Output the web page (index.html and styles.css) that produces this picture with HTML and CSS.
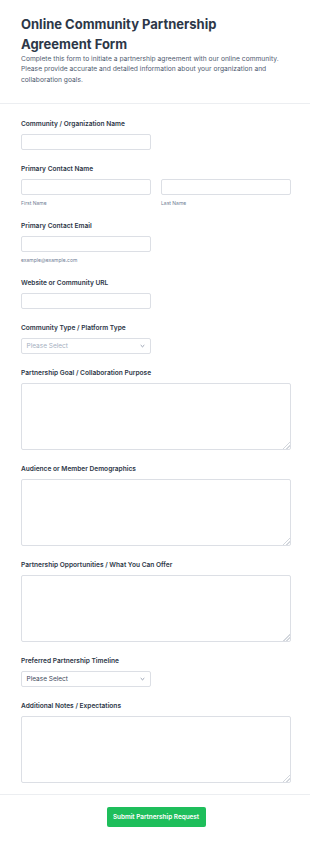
FILE: index.html
```html
<!DOCTYPE html>
<html lang="en">
<head>
  <meta charset="UTF-8" />
  <meta name="viewport" content="width=device-width, initial-scale=1.0"/>
  <title>Online Community Partnership Agreement Form</title>
  <link rel="stylesheet" href="styles.css">
</head>
<body>
  <header class="form-header">
    <h1>Online Community Partnership Agreement Form</h1>
    <p>Complete this form to initiate a partnership agreement with our online community. Please provide accurate and detailed information about your organization and collaboration goals.</p>
  </header>

  <form>
    <div class="fields">
      <div class="field">
        <label for="org">Community / Organization Name</label>
        <input id="org" class="input half" type="text">
      </div>

      <div class="field">
        <label>Primary Contact Name</label>
        <div class="name-row">
          <div>
            <input class="input" type="text">
            <span class="sublabel">First Name</span>
          </div>
          <div>
            <input class="input" type="text">
            <span class="sublabel">Last Name</span>
          </div>
        </div>
      </div>

      <div class="field">
        <label for="email">Primary Contact Email</label>
        <input id="email" class="input half" type="email">
        <span class="sublabel">example@example.com</span>
      </div>

      <div class="field">
        <label for="url">Website or Community URL</label>
        <input id="url" class="input half" type="text">
      </div>

      <div class="field">
        <label>Community Type / Platform Type</label>
        <div class="select half placeholder">
          <span>Please Select</span>
          <svg width="5" height="4" viewBox="0 0 5 4"><path d="M0.7 1.1 L2.5 2.8 L4.3 1.1" fill="none" stroke="#8a94a6" stroke-width="0.9"/></svg>
        </div>
      </div>

      <div class="field">
        <label for="goal">Partnership Goal / Collaboration Purpose</label>
        <textarea id="goal" class="textarea"></textarea>
      </div>

      <div class="field">
        <label for="audience">Audience or Member Demographics</label>
        <textarea id="audience" class="textarea"></textarea>
      </div>

      <div class="field">
        <label for="offer">Partnership Opportunities / What You Can Offer</label>
        <textarea id="offer" class="textarea"></textarea>
      </div>

      <div class="field">
        <label>Preferred Partnership Timeline</label>
        <div class="select half">
          <span>Please Select</span>
          <svg width="5" height="4" viewBox="0 0 5 4"><path d="M0.7 1.1 L2.5 2.8 L4.3 1.1" fill="none" stroke="#8a94a6" stroke-width="0.9"/></svg>
        </div>
      </div>

      <div class="field">
        <label for="notes">Additional Notes / Expectations</label>
        <textarea id="notes" class="textarea"></textarea>
      </div>
    </div>

    <div class="form-footer">
      <button type="button" class="submit">Submit Partnership Request</button>
    </div>
  </form>
</body>
</html>
```

FILE: styles.css
```css
* {
  box-sizing: border-box;
  margin: 0;
  padding: 0;
}

body {
  font-family: Inter, 'Noto Sans', sans-serif;
  background: #fff;
  color: #2d3748;
}

.form-header {
  padding: 15px 21px 18px 21px;
  border-bottom: 1px solid #eceef1;
}

.form-header h1 {
  font-size: 13px;
  line-height: 19.5px;
  font-weight: 700;
  color: #2d3748;
}

.form-header p {
  font-size: 6.7px;
  line-height: 10.3px;
  color: #4f5b70;
}

.fields {
  display: flex;
  flex-direction: column;
  gap: 14px;
  padding: 15px 19px 11px 21px;
}

.field label {
  display: block;
  font-size: 6.6px;
  line-height: 10px;
  font-weight: 600;
  color: #2d3748;
  margin-bottom: 5px;
}

.input,
.select,
.textarea {
  display: block;
  width: 100%;
  border: 1px solid #dcdfe5;
  border-radius: 2px;
  background: #fff;
  font-family: inherit;
}

.input {
  height: 16px;
}

.half {
  width: 130px;
}

.name-row {
  display: grid;
  grid-template-columns: 1fr 1fr;
  gap: 10px;
}

.sublabel {
  display: block;
  margin-top: 5px;
  font-size: 5px;
  line-height: 7px;
  color: #718096;
}

.select {
  height: 16px;
  display: flex;
  align-items: center;
  justify-content: space-between;
  padding: 0 5px 0 4.5px;
  font-size: 6.5px;
  color: #3d4759;
}

.select.placeholder {
  color: #a4afc0;
}

.textarea {
  height: 67px;
  resize: vertical;
}

.textarea::-webkit-resizer {
  background: linear-gradient(135deg, transparent 74%, #d3d7dd 74%, #d3d7dd 80%, transparent 80%, transparent 86%, #d3d7dd 86%, #d3d7dd 92%, transparent 92%);
}

.form-footer {
  border-top: 1px solid #eceef1;
  padding: 12px 0 16px 2px;
  display: flex;
  justify-content: center;
}

.submit {
  width: 99px;
  height: 20px;
  border: none;
  border-radius: 2px;
  background: #1ebe5b;
  color: #fff;
  font-family: inherit;
  font-size: 6.4px;
  font-weight: 600;
  cursor: pointer;
}
```
